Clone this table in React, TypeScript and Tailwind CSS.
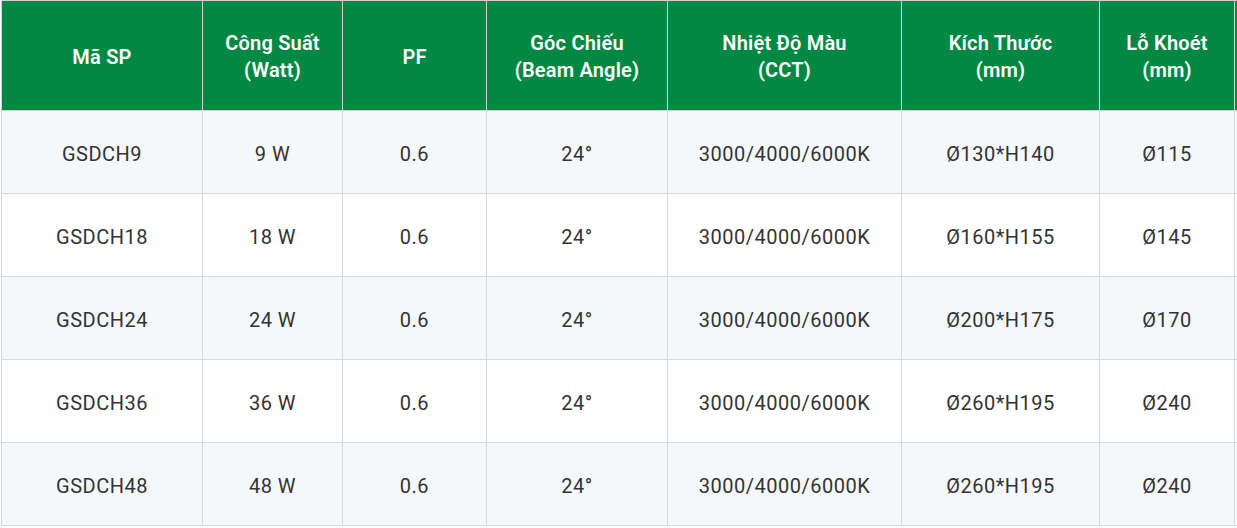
const headers = [
  ["Mã SP"],
  ["Công Suất", "(Watt)"],
  ["PF"],
  ["Góc Chiếu", "(Beam Angle)"],
  ["Nhiệt Độ Màu", "(CCT)"],
  ["Kích Thước", "(mm)"],
  ["Lỗ Khoét", "(mm)"],
];

const rows = [
  ["GSDCH9", "9 W", "0.6", "24°", "3000/4000/6000K", "Ø130*H140", "Ø115"],
  ["GSDCH18", "18 W", "0.6", "24°", "3000/4000/6000K", "Ø160*H155", "Ø145"],
  ["GSDCH24", "24 W", "0.6", "24°", "3000/4000/6000K", "Ø200*H175", "Ø170"],
  ["GSDCH36", "36 W", "0.6", "24°", "3000/4000/6000K", "Ø260*H195", "Ø240"],
  ["GSDCH48", "48 W", "0.6", "24°", "3000/4000/6000K", "Ø260*H195", "Ø240"],
];

const widths = ["w-[201px]", "w-[140px]", "w-[144px]", "w-[181px]", "w-[234px]", "w-[198px]", "w-[135px]", "w-[160px]"];

export default function App() {
  return (
    <div className="h-[528px] w-[1237px] overflow-hidden bg-white font-['Roboto',sans-serif]">
      <table className="ml-px w-[1393px] table-fixed border-collapse text-[20px]">
        <colgroup>
          {widths.map((w, i) => (
            <col key={i} className={w} />
          ))}
        </colgroup>
        <thead>
          <tr className="h-[110px] bg-[#018842] text-white">
            {headers.map((h, i) => (
              <th key={i} className="border border-[#cfd3d6] pt-[3px] text-center font-semibold leading-[27px] tracking-[0.2px]">
                {h.map((line, j) => (
                  <div key={j}>{line}</div>
                ))}
              </th>
            ))}
            <th className="border border-[#cfd3d6]"></th>
          </tr>
        </thead>
        <tbody>
          {rows.map((r, i) => (
            <tr key={i} className={`h-[83px] ${i % 2 === 0 ? "bg-[#f5f8fb]" : "bg-white"}`}>
              {r.map((c, j) => (
                <td key={j} className="border border-[#d6d9dc] pt-[3px] text-center tracking-[0.5px] text-[#333333]">
                  {c}
                </td>
              ))}
              <td className="border border-[#d6d9dc]"></td>
            </tr>
          ))}
        </tbody>
      </table>
    </div>
  );
}
